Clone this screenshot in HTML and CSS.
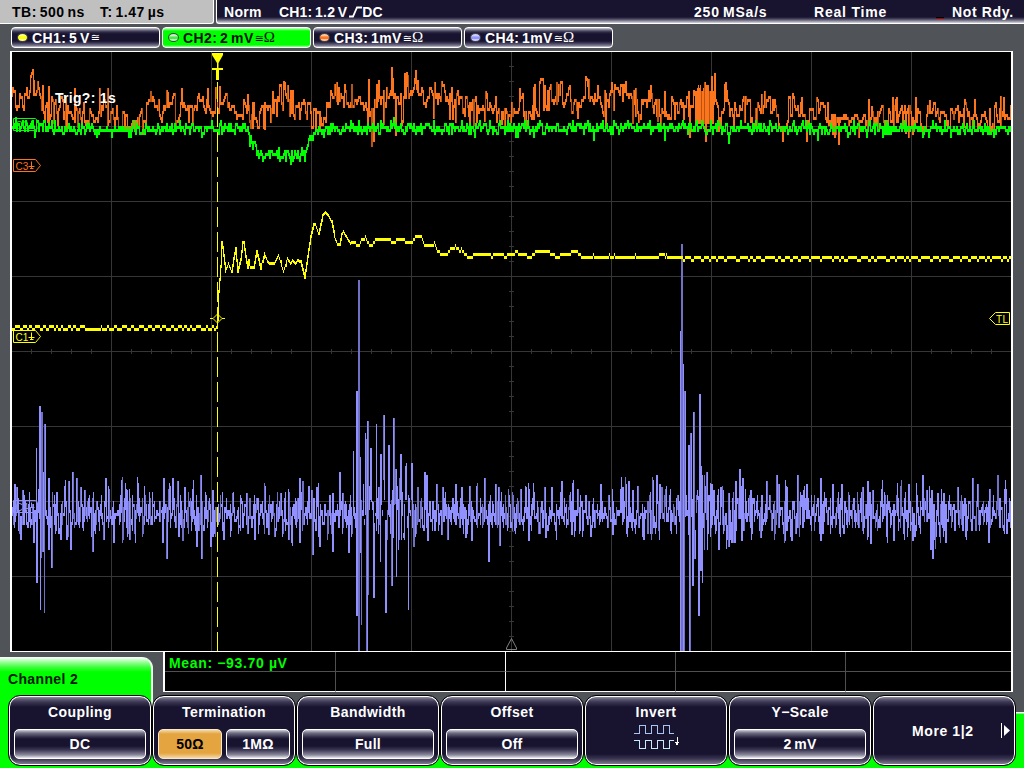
FILE: index.html
```html
<!DOCTYPE html>
<html lang="en">
<head>
<meta charset="utf-8">
<title>Oscilloscope</title>
<link rel="stylesheet" href="styles.css">
</head>
<body>
<div class="scope">
  <header class="status">
    <div class="timebase"><span>TB: 500 ns</span><span>T: 1.47 µs</span></div>
    <div class="trigger-bar">
      <span>Norm</span>
      <span class="trig-source">CH1: 1.2 V<svg class="edge" width="13" height="12" viewBox="0 0 13 12"><path d="M0 10.500H4L8 1.500H13" /></svg>DC</span>
      <span class="rate">250 MSa/s</span>
      <span class="real-time">Real Time</span>
      <span class="ready"><i class="lamp"></i>Not Rdy.</span>
    </div>
  </header>
  <nav class="channels">
    <div class="channel c1"><i class="dot"></i><span>CH1: 5 V</span><span class="sym">≅</span></div>
    <div class="channel c2 active"><i class="dot"></i><span>CH2: 2 mV</span><span class="sym">≅<span class="ohm">Ω</span></span></div>
    <div class="channel c3"><i class="dot"></i><span>CH3: 1mV</span><span class="sym">≅<span class="ohm">Ω</span></span></div>
    <div class="channel c4"><i class="dot"></i><span>CH4: 1mV</span><span class="sym">≅<span class="ohm">Ω</span></span></div>
  </nav>
  <main class="display">
    <svg class="plot" width="999" height="599" viewBox="12 52 999 599">
      <path id="grid" class="grid"/>
      <g class="marker m3"><path d="M13.500 159.500H35.500L40.500 165.500L35.500 171.500H13.500Z"/><text x="15.500" y="169.500">C3</text><path d="M31.500 161.500V168M28.500 166.500H34.500M30 168.500H33.500"/></g>
      <path id="ch3dim" class="t3 dim"/><path id="ch3" class="t3"/>
      <path id="ch4dim" class="t4 dim"/><path id="ch4" class="t4"/>
      <g class="marker m4"><path d="M13.500 500.500H35.500L40.500 506.500L35.500 512.500H13.500Z"/><text x="15.500" y="510.500">C4</text><path d="M31.500 502.500V507M28.500 507.500H34.500"/></g>
      <path class="cursor" d="M217.500 82V651"/>
      <path id="ch1" class="t1"/>
      <path id="ch2" class="t2"/>
      <g class="marker m2"><path d="M13.500 118.500H35.500L40.500 124.500L35.500 130.500H13.500Z"/><text x="15.500" y="128.500">C2</text><path d="M31.500 120.500V125M28.500 125.500H34.500"/></g>
      <g class="marker m1"><path d="M13.500 330.500H35.500L40.500 336.500L35.500 342.500H13.500Z"/><text x="15.500" y="340.500">C1</text><path d="M31.500 332.500V339M28.500 337.500H34.500M30 339.500H33.500"/></g>
      <g class="marker m1"><path d="M1009.500 312.500H995.500L989.500 318.500L995.500 324.500H1009.500Z"/><text x="996" y="322.500" textLength="12">TL</text></g>
      <path class="solid-y" d="M212 53H223V55L218.500 63V68H223V70H219V80H216V70H212V68H217V63L212 55Z"/>
      <path class="diamond" d="M210 318.500H213L217.500 314L222 318.500H225M213 318.500L217.500 323L222 318.500"/>
      <path class="center-mark" d="M506.500 649.500H516.500V648L511.500 638.500L506.500 648Z"/>
      <text class="trig-text" x="55" y="103" textLength="61">Trig?: 1s</text>
    </svg>
  </main>
  <footer class="bottom">
    <div class="tab-row">
      <div class="menu-tab">Channel 2</div>
      <div class="measure">
        <div class="cell m-value">Mean: −93.70 µV</div><div class="cell"></div><div class="cell"></div><div class="cell"></div><div class="cell"></div>
        <div class="cell"></div><div class="cell"></div><div class="cell"></div><div class="cell"></div><div class="cell"></div>
      </div>
    </div>
    <div class="menu">
      <section class="key"><h2>Coupling</h2><div class="values"><b>DC</b></div></section>
      <section class="key"><h2>Termination</h2><div class="values pair"><b class="on">50Ω</b><b>1MΩ</b></div></section>
      <section class="key"><h2>Bandwidth</h2><div class="values"><b>Full</b></div></section>
      <section class="key"><h2>Offset</h2><div class="values"><b>Off</b></div></section>
      <section class="key"><h2>Invert</h2>
        <svg class="invert" width="48" height="26" viewBox="0 0 48 26"><path class="w1" d="M0 9.500H5.500V1.500H11.500V9.500H17.500V1.500H23.500V9.500H29.500V1.500H35.500V9.500H40"/><path class="w2" d="M0 16.500H5.500V24.500H11.500V16.500H17.500V24.500H23.500V16.500H29.500V24.500H35.500V16.500H40"/><path class="arrow" d="M43.500 13V20"/><path class="head" d="M41 18.500H46L43.500 22Z"/></svg>
      </section>
      <section class="key"><h2>Y−Scale</h2><div class="values"><b class="tight">2 mV</b></div></section>
      <section class="key more"><span>More 1|2</span><svg width="9" height="16" viewBox="0 0 9 16"><path class="bar" d="M.5 0V15"/><path class="tri" d="M3 2L9 7.500L3 13Z"/></svg></section>
    </div>
  </footer>
</div>
<script src="scope.js"></script>
</body>
</html>
```

FILE: styles.css
```css
* { box-sizing: border-box; }
body { margin: 0; background: #505458; }
.scope {
  width: 1024px; height: 768px; overflow: hidden;
  display: flex; flex-direction: column;
  background: #505458; color: #fff;
  font: bold 14px/16px "Liberation Sans", Arial, sans-serif;
  letter-spacing: .3px;
}
.status { display: flex; gap: 2px; height: 24px; }
.timebase {
  width: 214px; display: grid; grid-template-columns: 88px 1fr;
  padding: 4px 0 0 12px; color: #000; background: #c0c0c0;
  border-right: 1px solid #fff; border-bottom: 1px solid #fff;
  border-bottom-right-radius: 3px;
  letter-spacing: .5px; word-spacing: -1.5px;
}
.trigger-bar {
  flex: 1; display: grid;
  grid-template-columns: 55px 415px 120px 121px 1fr;
  padding: 4px 0 0 7px; white-space: nowrap;
  border-left: 1px solid #fff; border-bottom: 1px solid #fff;
  border-bottom-left-radius: 3px;
  background: linear-gradient(#181430 0 17px, #45425c 19px, #8c8a9c 21px, #d8d8e0 23px);
}
.trig-source { letter-spacing: .2px; word-spacing: -1.5px; }
.rate { letter-spacing: .8px; word-spacing: -1.5px; }
.real-time { letter-spacing: .8px; }
.edge { margin: 0 0 -1px 2px; vertical-align: baseline; }
.edge path { fill: none; stroke: #fff; stroke-width: 1.8; }
.ready { display: flex; letter-spacing: .65px; }
.lamp { width: 8px; height: 2px; margin: 13px 8px 0 1px; background: #000; border-bottom: 1px solid #b00000; flex: none; }
.channels { display: flex; gap: 2px; padding: 3px 0 3px 11px; height: 27px; }
.channel {
  width: 149px; height: 21px; padding: 0 5px; white-space: nowrap;
  display: flex; align-items: center;
  border: 1px solid #fff; border-radius: 4px;
  letter-spacing: .4px; word-spacing: -1.5px;
  background: linear-gradient(#d0d0d8, #706e84 2px, #302c48 4px, #181430 6px 13px, #3c3854 15px, #85839a 18px, #d8d8e0);
}
.channel.active { color: #041004; background: linear-gradient(#c8ffc8, #00ff00 3px 17px, #a0ffa0); }
.dot { width: 11px; height: 9px; margin-right: 4px; border-radius: 50%; border: 1px solid #404048; }
.c1 .dot { background: linear-gradient(#ffff90 20%, #ffff00 40% 65%, #ffffa0 80%); }
.c2 .dot { background: linear-gradient(#d0e8d0 25%, #40f040 45% 65%, #c8f0c8 80%); border-color: #305030; }
.c3 .dot { background: linear-gradient(#ffc8a0 20%, #ff7420 45% 65%, #ffc8a0 80%); }
.c4 .dot { background: linear-gradient(#d0d0ff 20%, #9494ff 45% 65%, #d0d0ff 80%); }
.sym { font: 11px/14px "DejaVu Sans", sans-serif; letter-spacing: 0; margin-left: 1px; }
.ohm { font: 15px/14px "Liberation Serif", serif; }
.display { width: 1003px; margin-left: 10px; border: solid #fff; border-width: 1px 2px 0; background: #000; height: 600px; flex: none; }
.plot { display: block; }
.grid { fill: #363636; shape-rendering: crispEdges; }
.t1, .t2, .t3, .t4 { shape-rendering: crispEdges; }
.t1 { fill: #ffff00; }
.t2 { fill: #00ff00; }
.t3 { fill: #fc741c; }
.t3.dim { fill: #b85414; }
.t4 { fill: #9090ff; }
.t4.dim { fill: #7070c4; }
.marker path { fill: none; stroke: currentColor; stroke-width: 1; }
.marker text { fill: currentColor; font: 10px "Liberation Sans", sans-serif; letter-spacing: 0; }
.m1 { color: #ffff00; }
.m2 { color: #00ff00; }
.m3 { color: #fc741c; }
.m4 { color: #9090ff; }
.cursor { stroke: #ffff00; stroke-dasharray: 20 5; }
.solid-y { fill: #ffff00; }
.diamond { fill: none; stroke: #ffff00; }
.center-mark { fill: none; stroke: #808080; }
.trig-text { fill: #fff; }
.bottom { flex: 1; display: flex; flex-direction: column; background: linear-gradient(#fff 0 1px, transparent 1px) 10px 0 / 1003px 100% no-repeat; }
.tab-row { display: flex; height: 44px; gap: 10px; }
.menu-tab {
  width: 153px; height: 54px; margin-top: 6px; padding: 13px 8px 0;
  color: #001800; letter-spacing: .35px;
  border-right: 2px solid #e8ffe8; border-top: 1px solid #f4fff4; border-top-right-radius: 11px;
  background: linear-gradient(#f0fff0, #b0ffb0 3px, #40ff40 9px, #00ff00 14px);
}
.measure {
  width: 850px; height: 41px; display: grid;
  grid-template: 20px 20px / 171px 170px 170px 170px 1fr;
  background: #000; border: solid #fff; border-width: 1px 2px;
  color: #00ff00;
}
.cell { border-right: 1px solid #505050; border-bottom: 1px solid #505050; padding: 3px 0 0 4px; white-space: nowrap; }
.cell:nth-child(5n+2) { border-right-color: #fff; }
.cell:nth-child(5n) { border-right: 0; }
.cell:nth-child(n+6) { border-bottom-color: #fff; }
.m-value { letter-spacing: .65px; }
.menu {
  flex: 1; display: grid; grid-template-columns: repeat(7, 144px);
  padding-left: 8px;
  background:
    linear-gradient(#0f0 0 0) 0 0 / 8px 100% no-repeat,
    linear-gradient(#fff 0 1px, #0f0 2px) 1016px 17px / 8px 100px no-repeat,
    linear-gradient(#0f0 0 0) 0 60px / 100% 20px no-repeat,
    linear-gradient(#0f0 0 0) 0 0 / 30px 100% no-repeat;
}
.key {
  height: 71px; padding: 8px 5px 0; text-align: center;
  border: 1px solid #000; border-radius: 12px;
  box-shadow: inset 0 0 0 1px #fff;
  background: linear-gradient(#aaa8b8, #625f78 3px, #3c3854 6px, #181430 11px calc(100% - 11px), #3c3854 calc(100% - 6px), #8c8a9c);
}
.key h2 { margin: 0; font: inherit; letter-spacing: .45px; }
.values { display: flex; gap: 4px; margin-top: 9px; }
.values b {
  flex: 1; height: 30px; line-height: 28px; border: 1px solid #fff; border-radius: 5px;
  background: linear-gradient(#d0d0d8, #706e84 3px, #302c48 7px, #181430 9px 16px, #3c3854 20px, #8c8a9c 25px, #e8e8ee);
}
.values .on { color: #000; background: linear-gradient(#f4d8a8, #e4a440 4px 23px, #f4d8a8); border-color: #f8e8c8; }
.values .tight { word-spacing: -1.5px; }
.invert { display: block; margin: 3px 0 0 43px; transform: translate(.5px, .5px); shape-rendering: crispEdges; }
.invert path { fill: none; }
.invert .w1 { stroke: #a8c4f0; }
.invert .w2 { stroke: #c8ecff; }
.invert .arrow { stroke: #fff; }
.invert .head { fill: #fff; }
.more { display: flex; align-items: center; padding: 1px 5px 0 39px; letter-spacing: .6px; }
.more svg { margin: -1px 0 0 auto; }
.bar { stroke: #fff; }
.tri { fill: #fff; }
```

FILE: scope.js
```js
// Trace renderer: each trace is a run of one-pixel columns with a top and a bottom.
let seed = 4711;
function rnd() {
  seed = (seed * 1664525 + 1013904223) >>> 0;
  return seed / 4294967296;
}
function rect(x, top, bottom, w) {
  return "M" + x + " " + top + "h" + (w || 1) + "V" + bottom + "h-" + (w || 1) + "z";
}
function set(id, d) { document.getElementById(id).setAttribute("d", d); }
function pairs(text) {
  return text.trim().split(/\s+/).map(p => p.split(",").map(Number));
}
function level(points, x) {
  for (let i = 1; i < points.length; i++) {
    const a = points[i - 1], b = points[i];
    if (x <= b[0]) return a[1] + (b[1] - a[1]) * (x - a[0]) / (b[0] - a[0]);
  }
  return points[points.length - 1][1];
}

let grid = "";
for (let x = 111; x < 1000; x += 100) grid += rect(x, 52, 651);
for (let y = 126; y < 600; y += 75) grid += rect(12, y, y + 1, 999);
for (let x = 31; x < 1011; x += 20) grid += rect(x, 349, 354);
for (let y = 66; y < 651; y += 15) grid += rect(509, y, y + 1, 5);
set("grid", grid);

// CH3: baseline wander, then upward and downward peaks.
const base3 = pairs(`12,94 20,98 30,88 38,92 45,108 55,105 70,112 85,112 95,115 105,105 115,117 130,120 145,115
150,104 165,103 175,108 200,106 210,108 217,97 230,106 245,108 255,115 265,110 283,95 295,103 305,115 315,118
322,110 330,95 340,95 350,100 360,95 370,112 380,100 390,90 400,108 405,88 415,85 425,100 435,93 445,95 455,105
465,100 475,108 485,100 495,108 505,118 515,105 525,115 540,92 550,98 560,92 570,96 577,110 585,88 592,95
605,105 615,92 625,95 635,105 645,100 660,110 675,105 690,107 712,100 718,123 725,90 732,113 745,105 755,115
765,98 775,113 785,102 795,98 805,115 812,105 825,115 850,117 875,116 895,112 915,119 935,112 950,117 965,108
985,120 1003,106 1011,115`);
const peaks3 = pairs(`30,76 33,80 42,85 48,86 74,88 99,88 107,88 150,91 167,92 181,88 207,88 219,86 247,94 272,91 284,82
287,85 334,84 336,82 351,84 368,79 376,84 378,80 391,67 404,73 407,75 415,70 417,80 434,82 443,85 485,91 519,88
544,85 556,82 569,85 585,76 588,79 597,85 611,82 635,88 650,85 664,91 688,91 697,88 704,82 706,85 711,76 714,73
725,82 761,94 764,91 801,97 816,97 871,106 892,97 896,97 915,97 929,100 964,100 1003,97 1010,106
53,124 65,126 77,128 87,128 114,130 120,126 124,130 130,129 134,132 142,130 175,129 252,129 264,130 270,123
315,129 319,130 367,128 371,147 373,142 383,125 395,136 433,119 449,120 469,123 484,122 501,125 504,127 524,126
533,120 577,119 605,126 632,124 638,123 657,122 689,138 705,142 718,131 733,126 752,128 782,142 806,142 832,135
834,138 838,145 858,138 877,130 893,130 905,134 908,138 912,135 925,130 963,128 987,131 1000,128`);
let cols3 = [], prev = 94;
for (let x = 12; x < 1011; x++) {
  let v = level(base3, x) + (rnd() + rnd() - 1) * 18;
  if (rnd() < .42) v = prev + (rnd() - .5) * 6;
  v = Math.round(v / 3) * 3;
  cols3[x] = [Math.min(v, prev), Math.max(v, prev) + 3];
  prev = v;
}
for (const [x, y] of peaks3) for (let k = 0; k < 2; k++) {
  const c = cols3[x + k];
  if (!c) continue;
  if (y < level(base3, x)) c[0] = Math.min(c[0], y); else c[1] = Math.max(c[1], y);
}
for (let x = 695; x < 714; x++) {
  cols3[x][0] = Math.min(cols3[x][0], 85 + Math.floor(rnd() * 3) * 3);
  cols3[x][1] = Math.max(cols3[x][1], 124);
}
let bright = "", dim = "";
for (let x = 12; x < 1011; x++) {
  const c = cols3[x], d = rect(x, c[0], c[1]);
  if (c[1] - c[0] > 8 && rnd() < .22) dim += d; else bright += d;
}
set("ch3", bright);
set("ch3dim", dim);

// CH4: noise floor plus bursts listed as x, top, bottom.
const cols4 = [];
prev = 513;
for (let x = 12; x < 1011; x++) {
  let v = 513 + (x % 4 < 2 ? -1 : 1) * (rnd() * rnd() * 24 + 1) + (rnd() - .5) * 14;
  v = Math.round(v / 3) * 3;
  cols4[x] = [Math.min(v, prev), Math.max(v, prev) + 3];
  if (rnd() < .45) {
    cols4[x][0] -= 3 + Math.floor(rnd() * 4) * 3;
    cols4[x][1] += 3 + Math.floor(rnd() * 3) * 3;
  }
  prev = v;
}
const tops4 = pairs(`14,484 16,487 22,490 48,478 64,490 68,481 72,472 76,478 80,487 84,490 105,478 126,490 163,478 172,478
177,481 184,487 200,475 212,490 232,493 246,493 280,493 299,478 302,481 311,490 316,487 332,493 339,472 342,493
378,487 392,490 417,487 424,472 426,475 436,484 442,487 455,484 461,487 484,478 495,484 498,487 525,487 544,487
551,487 561,481 572,487 600,484 622,487 625,484 628,481 632,490 652,490 656,475 659,484 661,487 711,484 713,490
720,487 722,490 728,493 735,481 739,469 742,478 750,490 766,481 776,475 778,484 786,487 797,475 803,490 806,484
820,478 832,484 841,484 862,487 867,481 872,490 908,484 922,475 926,490 931,490 937,493 943,493 957,487 972,478
977,484 997,475 1005,493`);
const lows4 = pairs(`20,540 33,543 48,550 51,568 60,540 66,540 70,550 92,552 113,543 129,540 162,543 166,559 182,541
196,547 201,559 210,547 212,537 223,540 268,535 288,540 299,543 312,555 319,547 332,552 348,553 413,547 427,541
441,535 465,538 471,541 488,562 528,541 545,538 571,535 612,535 643,538 718,550 728,547 732,543 741,541 760,538
784,541 791,541 820,541 870,544 893,541 912,541 930,550 932,559 945,543 965,537 988,543`);
for (const [x, y] of tops4) for (let k = 0; k < 2; k++) cols4[x + k][0] = Math.min(cols4[x + k][0], y);
for (const [x, y] of lows4) for (let k = 0; k < 2; k++) cols4[x + k][1] = Math.max(cols4[x + k][1], y);
const bursts = pairs(`36,448,583 37,503,583 39,406,519 40,406,610 41,412,558 42,412,552 43,472,552 44,424,613 45,424,516
353,451,516 356,391,616 357,391,616 358,280,651 359,280,651 360,457,553 361,500,625 363,484,516 365,433,515 366,439,651
367,421,651 368,421,595 370,448,500 371,448,502 373,502,598 374,523,598 376,424,531 380,454,562 381,454,505 383,415,480
384,415,500 385,520,613 386,520,613 388,445,515 389,445,517 391,500,586 392,490,586 393,418,538 394,418,505
395,469,504 396,469,577 398,499,550 399,478,540 400,454,500 401,454,540 403,533,538 405,466,500 406,463,500
408,495,610 411,463,500 412,463,528 414,510,547 680,331,651 681,244,651 682,244,651 683,364,651 684,391,651
685,391,517 688,445,535 689,445,651 690,433,651 691,433,517 692,499,586 693,412,586 694,412,559 695,530,559
697,490,500 698,496,616 699,394,616 700,394,571 701,466,571 702,475,583 704,475,550 706,472,520 707,472,550`);
for (const [x, a, b] of bursts) cols4[x] = [a, b];
const dimBursts = [358, 359, 366, 681, 682, 684];
bright = ""; dim = "";
for (let x = 12; x < 1011; x++) {
  const c = cols4[x], d = rect(x, c[0], c[1]);
  if (dimBursts.includes(x) || (c[1] - c[0] > 12 && rnd() < .25)) dim += d; else bright += d;
}
set("ch4", bright);
set("ch4dim", dim);

// CH2: flat line with one dip.
const base2 = pairs("12,127 30,124 50,126 60,128 150,128 245,126 250,138 257,153 303,154 308,142 316,130 350,125 420,127 650,126 690,125 730,127 1011,128");
let green = "";
prev = 126;
for (let x = 12; x < 1011; x++) {
  let v = level(base2, x) + (rnd() + rnd() + rnd() - 1.5) * 6;
  if (rnd() < .06) v += (rnd() - .4) * 13;
  v = Math.round(v / 3) * 3;
  green += rect(x, Math.min(v, prev), Math.max(v, prev) + 3);
  prev = v;
}
set("ch2", green);

// CH1: step response with ringing.
const base1 = pairs(`12,326 216,326 217,318 218,290 220,265 221,241 222,246 225,270 228,262 231,270 233,257 235,247 237,270
240,258 242,241 243,241 245,255 247,266 248,259 250,266 253,266 256,250 258,258 260,267 264,252 267,260 269,262 274,262
278,254 283,270 287,257 290,262 292,259 295,262 297,259 300,260 304,276 307,255 310,235 313,223 315,223 318,232
322,214 325,211 328,214 331,220 334,235 337,243 339,243 341,233 343,230 347,237 350,242 355,242 358,245 361,239
365,236 367,240 371,245 375,239 390,239 393,242 396,239 404,239 410,242 415,236 421,236 424,244 432,244 434,241
438,251 446,254 449,249 455,245 460,250 461,248 465,254 470,256 474,253 490,253 491,256 494,253 502,253 505,256
508,253 516,251 523,253 530,256 535,251 549,251 552,253 558,256 561,253 573,251 577,251 582,256 655,256 661,254
674,256 1011,257`);
let yellow = "", run = 0, flat = 325;
prev = 326;
for (let x = 12; x < 1011; x++) {
  let v = level(base1, x);
  if (x < 216) {
    if (run-- <= 0) { flat = flat === 325 ? 328 : 325; run = 1 + Math.floor(rnd() * 4); }
    v = x > 89 && x < 101 ? 328 : flat;
  }
  else if (x > 674) {
    if (run-- <= 0) { flat = flat === 256 ? 259 : 256; run = flat === 256 ? 2 + Math.floor(rnd() * 8) : 1 + Math.floor(rnd() * 3); }
    v = flat;
  }
  else if (x > 590 && rnd() < .05) v -= 2;
  v = Math.round(v);
  if (x > 350 && x < 675) v = Math.round((v - 1) / 3) * 3 + 1;
  const tall = Math.abs(v - prev) > 3;
  yellow += rect(x, tall ? Math.min(v, prev) : v, (tall ? Math.max(v, prev) : v) + 3);
  prev = v;
}
set("ch1", yellow);
```
